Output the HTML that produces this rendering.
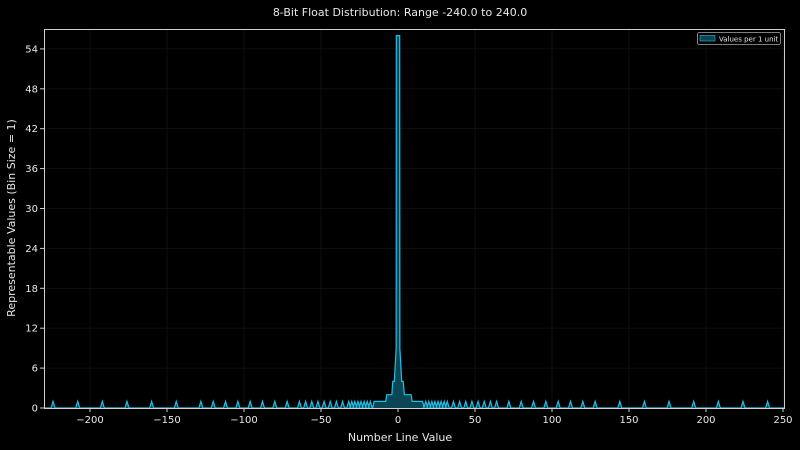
<!DOCTYPE html>
<html><head><meta charset="utf-8"><style>
html,body{margin:0;padding:0;background:#000;width:800px;height:450px;overflow:hidden}
svg{display:block}
text{font-family:"DejaVu Sans","Liberation Sans",sans-serif;fill:#e8e8e8}
</style></head><body>
<svg id="s" width="800" height="450" viewBox="0 0 800 450" xmlns="http://www.w3.org/2000/svg">
<text x="400" y="16" font-size="11" text-anchor="middle">8-Bit Float Distribution: Range -240.0 to 240.0</text>
<text x="400" y="441" font-size="11" text-anchor="middle">Number Line Value</text>
<text transform="translate(15,218) rotate(-90)" font-size="11" text-anchor="middle">Representable Values (Bin Size = 1)</text>
<g id="grid"></g>
<path id="fill" fill="#0a4656" stroke="none"/>
<path id="line" fill="none" stroke="#1ec0ea" stroke-width="1.2"/>
<rect x="44.5" y="29.5" width="740" height="379" fill="none" stroke="#cfcfcf" stroke-width="1"/>
<g id="ticks"></g>
<rect x="697.5" y="32.5" width="83" height="12" rx="2" fill="#000" stroke="#aaa" stroke-width="0.8"/>
<rect x="700" y="35.5" width="15" height="5.5" fill="#0a4656" stroke="#1ec0ea" stroke-width="0.6"/>
<text x="719" y="41.5" font-size="7">Values per 1 unit</text>
</svg>
<script>
var X=function(v){return 398+v*1.54},Y=function(v){return 408-v*6.65};
var g=document.getElementById('grid'),t=document.getElementById('ticks'),h='',k='';
for(var v=-200;v<=250;v+=50){var x=X(v);h+='<line x1="'+x+'" y1="30" x2="'+x+'" y2="408" stroke="#121212" stroke-width="0.8"/>';
k+='<line x1="'+x+'" y1="408" x2="'+x+'" y2="412" stroke="#cfcfcf"/><text x="'+x+'" y="423" font-size="10" text-anchor="middle">'+(v<0?'\u2212'+(-v):v)+'</text>';}
for(var v=0;v<=54;v+=6){var y=Y(v);h+='<line x1="45" y1="'+y+'" x2="784" y2="'+y+'" stroke="#121212" stroke-width="0.8"/>';
k+='<line x1="40" y1="'+y+'" x2="44" y2="'+y+'" stroke="#cfcfcf"/><text x="38" y="'+(y+3.5)+'" font-size="10" text-anchor="end">'+v+'</text>';}
g.innerHTML=h;t.innerHTML=k;
var vals=[];
for(var a=18;a<32;a+=2)vals.push(a);
for(var a=32;a<64;a+=4)vals.push(a);
for(var a=64;a<128;a+=8)vals.push(a);
for(var a=128;a<=240;a+=16)vals.push(a);
var all=[];vals.forEach(function(v){if(-v>-229)all.push(-v);all.push(v)});all.sort(function(a,b){return a-b});
var d='M45,408';
all.filter(function(v){return v<0}).forEach(function(v){d+=' L'+X(v-1.3)+',408 L'+X(v)+','+Y(1)+' L'+X(v+1.3)+',408';});
var P=function(x,y){d+=' L'+X(x)+','+Y(y);};
P(-16.5,0);P(-15.5,1);P(-8,1);P(-7.3,2);P(-4,2);P(-3.4,4);P(-2.4,4);P(-1.2,9);P(-1.1,56);P(1.1,56);P(1.2,9);P(2.4,4);P(3.4,4);P(4.1,2);P(8.5,2);P(9.2,1);P(16,1);P(17,0);
all.filter(function(v){return v>0}).forEach(function(v){d+=' L'+X(v-1.3)+',408 L'+X(v)+','+Y(1)+' L'+X(v+1.3)+',408';});
d+=' L784,408';
document.getElementById('line').setAttribute('d',d);
document.getElementById('fill').setAttribute('d',d+' Z');
</script>
</body></html>
